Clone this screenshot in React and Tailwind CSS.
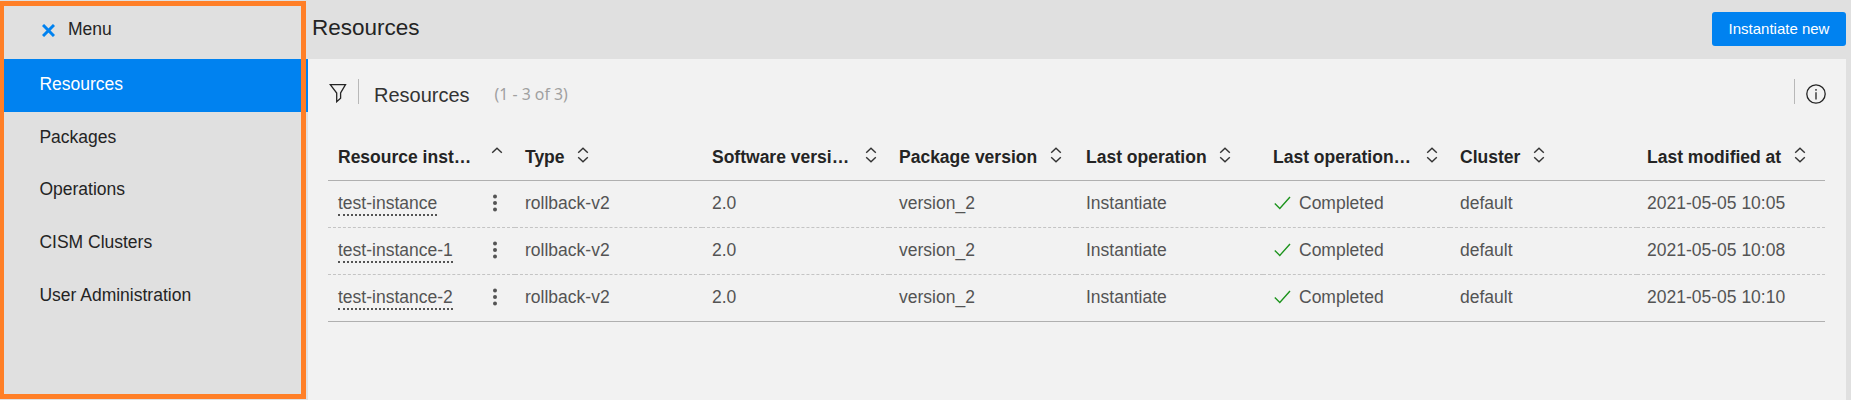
import React from 'react';

const menuItems = ['Resources', 'Packages', 'Operations', 'CISM Clusters', 'User Administration'];

const columns = [
  { label: 'Resource inst…', width: 'w-[140px]', sorted: true },
  { label: 'Type', width: '' },
  { label: 'Software versi…', width: 'w-[140px]' },
  { label: 'Package version', width: '' },
  { label: 'Last operation', width: '' },
  { label: 'Last operation…', width: 'w-[140px]' },
  { label: 'Cluster', width: '' },
  { label: 'Last modified at', width: '' },
];

const rows = [
  ['test-instance', 'rollback-v2', '2.0', 'version_2', 'Instantiate', 'Completed', 'default', '2021-05-05 10:05'],
  ['test-instance-1', 'rollback-v2', '2.0', 'version_2', 'Instantiate', 'Completed', 'default', '2021-05-05 10:08'],
  ['test-instance-2', 'rollback-v2', '2.0', 'version_2', 'Instantiate', 'Completed', 'default', '2021-05-05 10:10'],
];

function SortIcon({ sorted }) {
  return (
    <svg width="12" height="16" viewBox="0 0 12 16" fill="none" stroke="#333333" strokeWidth="1.4">
      <path d="M1.2 5.8 6 1.2l4.8 4.6" />
      {!sorted && <path d="M1.2 10.2 6 14.8l4.8-4.6" />}
    </svg>
  );
}

function CloseIcon() {
  return (
    <svg width="13" height="13" viewBox="0 0 13 13" fill="none" stroke="#0082f0" strokeWidth="3">
      <path d="M1 1l11 11M12 1 1 12" />
    </svg>
  );
}

function FilterIcon() {
  return (
    <svg width="18" height="20" viewBox="0 0 18 20" fill="none" stroke="#242424" strokeWidth="1.3">
      <path d="M1.3 1.7h15.2l-4.9 8.3v5.2l-3.9 3.5V10z" />
    </svg>
  );
}

function InfoIcon() {
  return (
    <svg width="20" height="20" viewBox="0 0 20 20" fill="none" stroke="#242424" strokeWidth="1.3">
      <circle cx="10" cy="10" r="9.2" />
      <path d="M10 8.2v7.3M10 5v1.8" />
    </svg>
  );
}

function CheckIcon() {
  return (
    <svg width="17" height="14" viewBox="0 0 17 14" fill="none" stroke="#1c931c" strokeWidth="1.4">
      <path d="M.8 7.6 5.8 12.4 16 1" />
    </svg>
  );
}

function KebabIcon() {
  return (
    <svg width="4" height="18" viewBox="0 0 4 18" fill="#545454">
      <circle cx="2" cy="2.5" r="2" />
      <circle cx="2" cy="9" r="2" />
      <circle cx="2" cy="15.5" r="2" />
    </svg>
  );
}

function Cell({ value, index }) {
  if (index === 0) {
    return (
      <>
        <span className="mt-[2px] h-[24px] border-b-2 border-dotted border-[#545454] leading-[22px]">{value}</span>
        <span className="ml-auto mr-[18px]"><KebabIcon /></span>
      </>
    );
  }
  if (index === 5) {
    return (
      <>
        <span className="ml-px mr-[8px]"><CheckIcon /></span>
        <span>{value}</span>
      </>
    );
  }
  return <span>{value}</span>;
}

export default function App() {
  return (
    <div className="relative flex h-[400px] w-[1851px] overflow-hidden bg-[#e0e0e0] font-['Liberation_Sans',Arial,sans-serif] text-[17.5px] text-[#242424]">
      <nav className="flex w-[308px] shrink-0 flex-col">
        <div className="flex h-[59px] items-center pl-[42px]">
          <span className="mt-[2px]"><CloseIcon /></span>
          <span className="ml-[13px] pb-px">Menu</span>
        </div>
        {menuItems.map((item, i) => (
          <div
            key={item}
            className={
              i === 0
                ? 'flex h-[53px] items-center bg-[#0082f0] pb-[3px] pl-[39.4px] text-white'
                : 'flex h-[52.75px] items-center pb-[3.4px] pl-[39.4px]'
            }
          >
            {item}
          </div>
        ))}
      </nav>

      <div className="flex grow flex-col pr-[5px]">
        <header className="flex h-[59px] items-center justify-between pl-[4px]">
          <h1 className="pb-[3px] text-[22.5px]">Resources</h1>
          <button className="mb-[2px] h-[34px] w-[134px] rounded-[3px] bg-[#0082f0] pt-[2px] text-[15px] text-white">Instantiate new</button>
        </header>

        <main className="grow bg-[#f2f2f2] pl-[20px] pr-[21px] pt-[20px]">
          <div className="flex h-[32px]">
            <span className="ml-[1px] mt-[4px]"><FilterIcon /></span>
            <span className="ml-[11px] h-[25px] w-px bg-[#b8b8b8]" />
            <h2 className="ml-[15px] mt-px text-[20px] leading-[30px] text-[#333333]">Resources</h2>
            <span className="ml-[25px] text-[15.8px] leading-[30px] text-[#a0a0a0] font-['Noto_Sans',sans-serif]">(1 - 3 of 3)</span>
            <span className="ml-auto h-[25px] w-px bg-[#b8b8b8]" />
            <span className="ml-[11px] mr-[-1px] mt-[5px]"><InfoIcon /></span>
          </div>

          <div className="mt-[21px] grid h-[49px] grid-cols-[repeat(8,187px)] border-b border-[#b0b0b0] font-bold">
            {columns.map((col) => (
              <div key={col.label} className="flex h-[48px] items-center whitespace-nowrap pl-[10px]">
                <span className={col.width + ' pt-[2px]'}>{col.label}</span>
                <span className="mb-[2px] ml-[12.5px]"><SortIcon sorted={col.sorted} /></span>
              </div>
            ))}
          </div>

          {rows.map((row, r) => (
            <div key={row[0]} className="grid h-[47px] grid-cols-[repeat(7,187px)_1fr] text-[#545454]">
              {row.map((value, i) => (
                <div
                  key={i}
                  className={
                    r === rows.length - 1
                      ? 'flex items-center whitespace-nowrap border-b border-[#b0b0b0] pb-[2px] pl-[10px]'
                      : 'flex items-center whitespace-nowrap border-b border-dashed border-[#c4c4c4] pb-[2px] pl-[10px]'
                  }
                >
                  <Cell value={value} index={i} />
                </div>
              ))}
            </div>
          ))}
        </main>
      </div>

      <div className="pointer-events-none absolute left-0 top-px h-[398px] w-[306px] border-[5px] border-l-4 border-[#ff7f27]" />
    </div>
  );
}
